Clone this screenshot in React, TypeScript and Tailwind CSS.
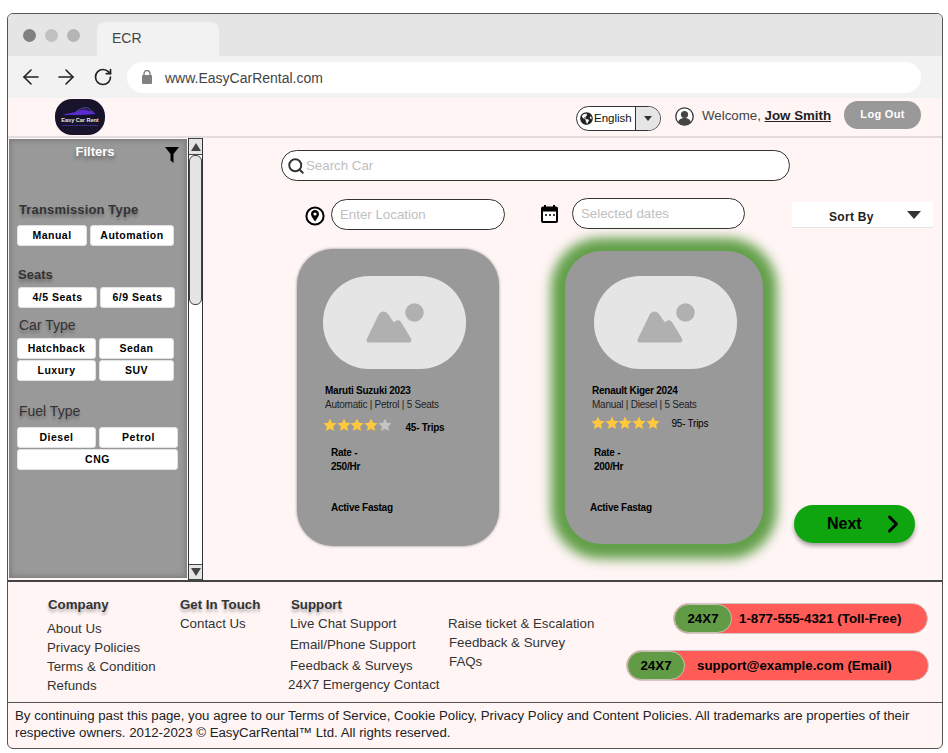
import React from 'react';
import { ArrowLeft, ArrowRight, RotateCw, Search, ChevronRight } from 'lucide-react';
import { FaGlobeAmericas } from 'react-icons/fa';

const heading = '[text-shadow:0_3px_3px_rgba(0,0,0,0.3)] text-[#333]';
const chip = 'flex items-center justify-center h-[21px] bg-white rounded-[3px] border border-[#e2e2e2] text-[10.500px] font-bold tracking-[0.5px] text-black';

function Star({ on }: { on: boolean }) {
  return (
    <svg width="14" height="14" viewBox="0 0 24 24" className="shrink-0 -mr-[0.3px]">
      <path d="M12 1l3.300 7.300 7.900.9-5.900 5.300 1.700 7.800L12 18.400 5 22.300l1.700-7.800L.8 9.200l7.900-.9z" fill={on ? '#ffc83d' : '#c4c4c4'} />
    </svg>
  );
}

function ImagePlaceholder() {
  return (
    <div className="w-[143px] h-[93px] rounded-[46px] bg-[#e5e5e5] flex items-center justify-center">
      <svg width="58" height="42" viewBox="0 0 58 42" className="mt-[2px]">
        <circle cx="48.500" cy="9.500" r="9.300" fill="#b0b0b0" />
        <path d="M3 39.500C.5 39.500 0 37.500 1 35.500L13 11C15 7.500 20 7.500 22 11L28 19.500C29 17.500 33 16 35 19L45 35.500C46 37.500 45 39.500 43 39.500Z" fill="#b0b0b0" />
      </svg>
    </div>
  );
}

function Logo() {
  return (
    <div className="w-[50px] h-[36px] rounded-[17px] bg-[#17132b] flex flex-col items-center overflow-hidden ml-[47px] mt-[1px] shrink-0">
      <svg width="38" height="10" viewBox="0 0 38 10" className="mt-[7px]">
        <path d="M2 9c5-2 9-2 13-3 3-2 8-3 11-2l6 2 3 2-7 .5c-6 .5-18 .5-26 .5z" fill="#5b2bd0" />
        <path d="M15 6c3-3 8-5 12-4l5 4" fill="none" stroke="#8a6cf0" strokeWidth="0.6" />
      </svg>
      <span className="text-[5.500px] leading-[6px] font-bold text-[#e8e8e8] whitespace-nowrap mt-[1px]">Easy Car Rent</span>
      <div className="w-[36px] h-[1px] mt-[2px] bg-[#3b2c86]" />
    </div>
  );
}

const cards = [
  {
    name: 'Maruti Suzuki 2023',
    spec: 'Automatic | Petrol | 5 Seats',
    stars: 4,
    trips: '45- Trips',
    rate: '250/Hr',
    box: 'w-[202px] h-[297px] pt-[27px] pl-[26px] shadow-[0_0_3px_0_rgba(110,110,110,0.8)]',
    name2: 'ml-[2px]',
    starRow: 'mt-[6px]',
    tripsCls: 'ml-[14px] mt-[3px] font-bold',
    rateCls: 'ml-[8px] mt-[11px]',
    tag: 'ml-[8px] mt-[27px]',
  },
  {
    name: 'Renault Kiger 2024',
    spec: 'Manual | Diesel | 5 Seats',
    stars: 5,
    trips: '95- Trips',
    rate: '200/Hr',
    box: 'w-[198px] h-[293px] pt-[25px] pl-[29px] ml-[66px] mt-[2px] shadow-[0_1px_12px_14px_#63a04a]',
    name2: '-ml-[2px]',
    starRow: '-ml-[3px] mt-[4px]',
    tripsCls: 'ml-[12px] mt-[1px]',
    rateCls: 'ml-[0px] mt-[15px]',
    tag: '-ml-[4px] mt-[27px]',
  },
];

function Card({ c }: { c: (typeof cards)[number] }) {
  return (
    <div className={`shrink-0 bg-[#999999] rounded-[36px] text-[10px] tracking-[-0.25px] leading-[14px] text-black ${c.box}`}>
      <ImagePlaceholder />
      <div className={`mt-[15px] font-bold ${c.name2}`}>{c.name}</div>
      <div className={`text-[#222] ${c.name2}`}>{c.spec}</div>
      <div className={`flex items-start ${c.starRow}`}>
        <div className="flex">
          {[0, 1, 2, 3, 4].map(i => <Star key={i} on={i < c.stars} />)}
        </div>
        <span className={c.tripsCls}>{c.trips}</span>
      </div>
      <div className={`font-bold ${c.rateCls}`}>
        <div>Rate -</div>
        <div>{c.rate}</div>
      </div>
      <div className={`font-bold ${c.tag}`}>Active Fastag</div>
    </div>
  );
}

function Scrollbar() {
  return (
    <div className="w-[15px] shrink-0 bg-white border-x border-[#333] flex flex-col">
      <div className="h-[17px] bg-[#e5e5e5] border-y border-[#444] flex items-center justify-center">
        <div className="w-0 h-0 border-x-[5px] border-x-transparent border-b-[8px] border-b-[#444]" />
      </div>
      <div className="h-[150px] bg-[#e5e5e5] border border-[#444] rounded-[6px]" />
      <div className="flex-1" />
      <div className="h-[16px] bg-[#e5e5e5] border-y border-[#444] flex items-center justify-center">
        <div className="w-0 h-0 border-x-[5px] border-x-transparent border-t-[8px] border-t-[#444]" />
      </div>
    </div>
  );
}

function Filters() {
  return (
    <div className="w-[178px] shrink-0 ml-[1px] mr-[1px] mt-[1px] mb-[2px] bg-[#999999] shadow-[inset_0_0_5px_2px_#7d7d7d] flex flex-col">
      <div className="relative h-[26px] text-center text-white font-bold text-[13px] leading-[26px] pr-[6px] [text-shadow:0_3px_4px_rgba(0,0,0,0.4)]">
        Filters
        <svg width="14" height="16" viewBox="0 0 14 16" className="absolute right-[8px] top-[8px]">
          <path d="M0 0h14L8.500 7v9L5.500 13.500V7z" fill="#000" />
        </svg>
      </div>
      <div className={`${heading} mt-[37px] ml-[10px] text-[13px] leading-[16px] font-bold tracking-[0.15px]`}>Transmission Type</div>
      <div className="flex gap-[3px] ml-[8px] mt-[7px]">
        <div className={`${chip} w-[70px]`}>Manual</div>
        <div className={`${chip} w-[84px]`}>Automation</div>
      </div>
      <div className={`${heading} mt-[21px] ml-[9px] text-[13px] leading-[16px] font-bold`}>Seats</div>
      <div className="flex gap-[3px] ml-[9px] mt-[4px]">
        <div className={`${chip} w-[79px]`}>4/5 Seats</div>
        <div className={`${chip} w-[75px]`}>6/9 Seats</div>
      </div>
      <div className={`${heading} mt-[9px] ml-[10px] text-[14px] leading-[16px]`}>Car Type</div>
      <div className="grid grid-cols-[79px_75px] gap-x-[3px] gap-y-[1px] ml-[8px] mt-[5px]">
        <div className={chip}>Hatchback</div>
        <div className={chip}>Sedan</div>
        <div className={chip}>Luxury</div>
        <div className={chip}>SUV</div>
      </div>
      <div className={`${heading} mt-[22px] ml-[10px] text-[14px] leading-[16px]`}>Fuel Type</div>
      <div className="grid grid-cols-[79px_79px] gap-x-[3px] gap-y-[1px] ml-[8px] mt-[8px]">
        <div className={chip}>Diesel</div>
        <div className={chip}>Petrol</div>
        <div className={`${chip} col-span-2`}>CNG</div>
      </div>
    </div>
  );
}

function Pill({ text, className, textCls }: { text: string; className: string; textCls: string }) {
  return (
    <div className={`h-[31px] rounded-full bg-[#ff5c58] border border-[#d8c4c4] flex items-center text-[13.300px] font-bold text-black ${className}`}>
      <div className="w-[58px] h-full rounded-full bg-[#629b46] border border-[#c4c4b4] flex items-center justify-center shrink-0">24X7</div>
      <span className={textCls}>{text}</span>
    </div>
  );
}

export default function App() {
  return (
    <div className="w-[948px] h-[753px] bg-white pt-[13px] pl-[7px] font-['Liberation_Sans',Arial,sans-serif]">
      <div className="w-[936px] h-[736px] border border-[#555] rounded-[6px] overflow-hidden flex flex-col bg-[#fff5f5]">
        {/* browser chrome */}
        <div className="h-[42px] bg-[#e5e5e5] flex items-end shrink-0">
          <div className="flex items-center gap-[9px] ml-[15px] mb-[14px]">
            <div className="w-[13px] h-[13px] rounded-full bg-[#808080]" />
            <div className="w-[13px] h-[13px] rounded-full bg-[#c0c0c0]" />
            <div className="w-[13px] h-[13px] rounded-full bg-[#b5b5b5]" />
          </div>
          <div className="w-[122px] h-[34px] ml-[17px] bg-[#f2f2f2] rounded-t-[8px] pl-[15px] pt-[6px] text-[14px] leading-[20px] text-[#444]">ECR</div>
        </div>
        <div className="h-[42px] bg-[#f2f2f2] flex items-center shrink-0">
          <ArrowLeft size={24} strokeWidth={1.6} className="ml-[11px] text-[#222] shrink-0" />
          <ArrowRight size={24} strokeWidth={1.6} className="ml-[11px] text-[#222] shrink-0" />
          <RotateCw size={20} strokeWidth={2} className="ml-[15px] text-[#222] shrink-0" />
          <div className="ml-[14px] w-[794px] h-[31px] rounded-full bg-white flex items-center">
            <svg width="12" height="14" viewBox="0 0 12 14" className="ml-[14px]">
              <rect x="1" y="5" width="10" height="9" rx="1" fill="#808080" />
              <path d="M3 5.500V3.500a3 3 0 0 1 6 0v2" fill="none" stroke="#808080" strokeWidth="1.400" />
            </svg>
            <span className="ml-[12px] pt-[2px] text-[14px] text-[#444]">www.EasyCarRental.com</span>
          </div>
        </div>
        {/* header */}
        <div className="h-[40px] shrink-0 border-b-2 border-[#e2dcdc] flex items-start">
          <Logo />
          <div className="ml-[471px] mt-[8px] w-[85px] h-[25px] rounded-full border border-[#333] bg-white flex overflow-hidden shrink-0">
            <div className="flex items-center pl-[3px] gap-[1px] w-[59px] border-r border-[#333] text-[11.500px] text-[#111]">
              <FaGlobeAmericas size={13} className="text-[#222] shrink-0" />
              English
            </div>
            <div className="flex-1 bg-[#e5e5e5] flex items-center justify-center">
              <div className="w-0 h-0 border-x-[4px] border-x-transparent border-t-[5px] border-t-[#333]" />
            </div>
          </div>
          <svg width="19" height="19" viewBox="0 0 19 19" className="ml-[14px] mt-[9px] shrink-0">
            <circle cx="9.500" cy="9.500" r="8.700" fill="#fff" stroke="#333" strokeWidth="1.300" />
            <circle cx="9.500" cy="7.500" r="3.600" fill="#444" />
            <path d="M3 15.500c1-3.500 3.500-4.500 6.500-4.500s5.500 1 6.500 4.500c-1.700 1.800-4 2.800-6.500 2.800s-4.800-1-6.500-2.800z" fill="#444" />
          </svg>
          <div className="ml-[8px] mt-[10px] w-[142px] shrink-0 text-[13.300px] leading-[16px] text-[#444] whitespace-nowrap">
            Welcome, <span className="font-bold underline text-[#222]">Jow Smith</span>
          </div>
          <div className="mt-[3px] w-[77px] h-[28px] rounded-full bg-[#999999] text-white text-[11px] font-bold tracking-[0.3px] flex items-center justify-center pb-[1px] shrink-0">Log Out</div>
        </div>
        {/* main */}
        <div className="h-[442px] shrink-0 flex items-stretch">
          <Filters />
          <Scrollbar />
          <div className="flex-1 flex flex-col min-w-0">
            <div className="mt-[12px] ml-[78px] w-[509px] h-[31px] rounded-[16px] border border-[#333] bg-white flex items-center shrink-0">
              <Search size={18} strokeWidth={2.600} className="ml-[5px] text-[#333] shrink-0" />
              <span className="ml-[1px] text-[13.300px] text-[#c0c0c0]">Search Car</span>
            </div>
            <div className="flex items-start mt-[17px] ml-[102px] h-[32px] shrink-0">
              <svg width="20" height="20" viewBox="0 0 20 20" className="mt-[8px] shrink-0">
                <circle cx="10" cy="10" r="8.600" fill="#fff" stroke="#000" strokeWidth="2" />
                <path d="M10 4c-2.500 0-4 1.800-4 4 0 2.500 2.500 5 4 7.500 1.500-2.500 4-5 4-7.500 0-2.200-1.500-4-4-4z" fill="#000" />
                <circle cx="10" cy="8" r="1.600" fill="#fff" />
              </svg>
              <div className="ml-[6px] mt-[1px] w-[174px] h-[31px] rounded-[16px] border border-[#333] bg-white pl-[8px] text-[13.300px] leading-[29px] text-[#c0c0c0]">Enter Location</div>
              <svg width="17" height="18" viewBox="0 0 17 18" className="ml-[36px] mt-[7px] shrink-0">
                <path d="M4 0v3M13 0v3" stroke="#000" strokeWidth="2" />
                <rect x="1" y="2.500" width="15" height="14.500" rx="1" fill="#fff" stroke="#000" strokeWidth="2" />
                <rect x="1" y="2.500" width="15" height="4" fill="#000" />
                <path d="M4 10h2M8 10h2M12 10h2" stroke="#000" strokeWidth="1.500" />
              </svg>
              <div className="ml-[14px] w-[173px] h-[31px] rounded-[16px] border border-[#333] bg-white pl-[8px] text-[13.300px] leading-[29px] text-[#c0c0c0]">Selected dates</div>
              <div className="ml-[47px] mt-[4px] w-[141px] h-[26px] bg-white border-b border-[#e5e5e5] flex items-center shrink-0">
                <span className="ml-[37px] mt-[4px] text-[12px] font-bold text-[#222] tracking-[0.3px]">Sort By</span>
                <div className="ml-[33px] w-0 h-0 border-x-[7px] border-x-transparent border-t-[8px] border-t-[#333]" />
              </div>
            </div>
            <div className="flex items-start mt-[19px] ml-[94px]">
              {cards.map(c => <Card key={c.name} c={c} />)}
              <div className="ml-[31px] mt-[256px] w-[121px] h-[38px] rounded-full bg-[#0ea50e] shadow-[0_3px_4px_rgba(0,0,0,0.35)] flex items-center text-black font-bold text-[16px] shrink-0">
                <span className="ml-[33px]">Next</span>
                <ChevronRight size={28} strokeWidth={2.600} className="ml-[17px] shrink-0" />
              </div>
            </div>
          </div>
        </div>
        {/* footer */}
        <div className="h-[122px] shrink-0 border-t-2 border-[#444] flex items-start text-[13.300px] leading-[19px] text-[#333]">
          <div className="ml-[39px] mt-[13px] w-[132px]">
            <div className={`${heading} font-bold ml-[1px] mb-[5px]`}>Company</div>
            <div>About Us</div>
            <div>Privacy Policies</div>
            <div>Terms &amp; Condition</div>
            <div>Refunds</div>
          </div>
          <div className="mt-[13px] ml-[1px] w-[110px]">
            <div className={`${heading} font-bold`}>Get In Touch</div>
            <div>Contact Us</div>
          </div>
          <div className="mt-[13px] w-[158px]">
            <div className={`${heading} font-bold ml-[1px]`}>Support</div>
            <div>Live Chat Support</div>
            <div className="mt-[2px]">Email/Phone Support</div>
            <div className="mt-[2px]">Feedback &amp; Surveys</div>
            <div className="-ml-[2px]">24X7 Emergency Contact</div>
          </div>
          <div className="mt-[32px]">
            <div>Raise ticket &amp; Escalation</div>
            <div className="ml-[1px]">Feedback &amp; Survey</div>
            <div className="ml-[1px]">FAQs</div>
          </div>
          <div className="flex-1 flex flex-col items-end pr-[14px] pt-[21px] gap-[16px]">
            <Pill text="1-877-555-4321 (Toll-Free)" className="w-[255px]" textCls="ml-[7px]" />
            <Pill text="support@example.com (Email)" className="w-[303px] -mr-[1px]" textCls="ml-[12px]" />
          </div>
        </div>
        <div className="flex-1 border-t border-[#555] px-[7px] pt-[4px] text-[13.250px] leading-[17px] text-[#222]">
          By continuing past this page, you agree to our Terms of Service, Cookie Policy, Privacy Policy and Content Policies. All trademarks are properties of their respective owners. 2012-2023 © EasyCarRental™ Ltd. All rights reserved.
        </div>
      </div>
    </div>
  );
}
